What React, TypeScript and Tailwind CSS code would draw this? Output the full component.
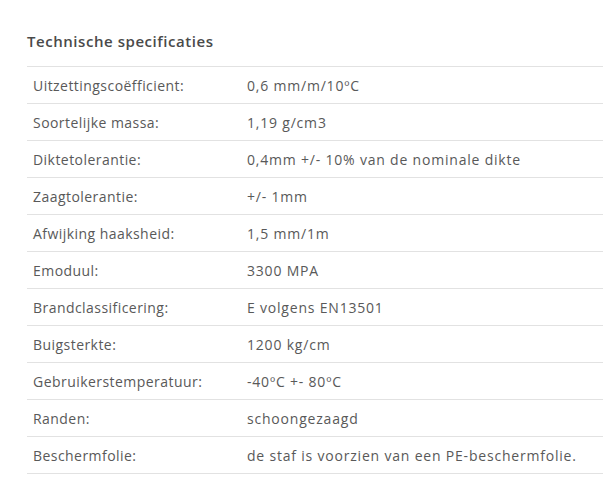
const SPECS: [string, string][] = [
  ["Uitzettingscoëfficient:", "0,6 mm/m/10ºC"],
  ["Soortelijke massa:", "1,19 g/cm3"],
  ["Diktetolerantie:", "0,4mm +/- 10% van de nominale dikte"],
  ["Zaagtolerantie:", "+/- 1mm"],
  ["Afwijking haaksheid:", "1,5 mm/1m"],
  ["Emoduul:", "3300 MPA"],
  ["Brandclassificering:", "E volgens EN13501"],
  ["Buigsterkte:", "1200 kg/cm"],
  ["Gebruikerstemperatuur:", "-40ºC +- 80ºC"],
  ["Randen:", "schoongezaagd"],
  ["Beschermfolie:", "de staf is voorzien van een PE-beschermfolie."],
];

export default function App() {
  return (
    <div className="min-h-[492px] w-[603px] bg-white pl-[27px] pt-[31px] font-['Open_Sans',sans-serif]">
      <h2 className="text-[15px] font-semibold leading-[20px] tracking-[0.55px] text-[#4a4a4a]">Technische specificaties</h2>
      <div className="mt-[15px] border-t border-[#e2e2e2]">
        {SPECS.map(([label, value]) => (
          <div key={label} className="flex h-[37px] items-center border-b border-[#e2e2e2] text-[14px] text-[#595959]">
            <div className="w-[220px] pl-[6px] tracking-[0.45px]">{label}</div>
            <div className="tracking-[0.8px]">{value}</div>
          </div>
        ))}
      </div>
    </div>
  );
}
